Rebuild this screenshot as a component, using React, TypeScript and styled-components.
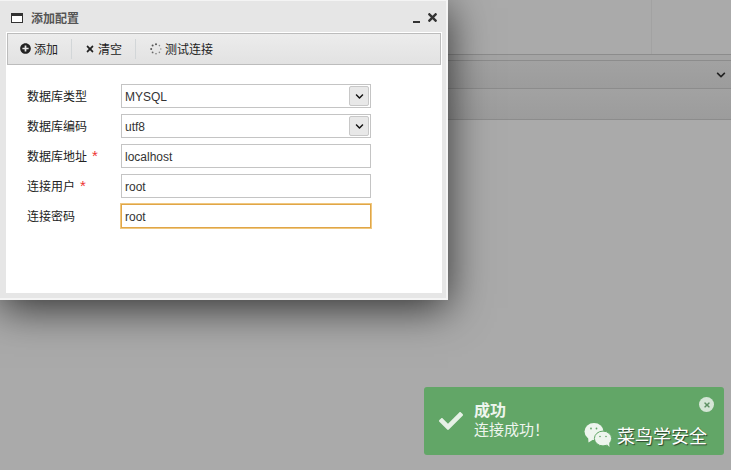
import styled, { createGlobalStyle } from "styled-components";
import { FaCheck, FaChevronDown, FaPlusCircle, FaTimes } from "react-icons/fa";

const GlobalStyle = createGlobalStyle`
  html, body {
    margin: 0;
    padding: 0;
    width: 731px;
    height: 470px;
    overflow: hidden;
    background: #aaaaaa;
  }
  * { box-sizing: border-box; }
`;

const fontStack = `"Liberation Sans", "Noto Sans CJK SC", sans-serif`;

const fields = [
  { label: "数据库类型", value: "MYSQL", select: true },
  { label: "数据库编码", value: "utf8", select: true },
  { label: "数据库地址", value: "localhost", required: true },
  { label: "连接用户", value: "root", required: true },
  { label: "连接密码", value: "root", focused: true }
];

const WindowIcon = () => (
  <svg width="12" height="12" viewBox="0 0 12 12">
    <rect x="0.5" y="1.5" width="11" height="9" fill="#fff" stroke="#333" />
    <rect x="0" y="1" width="12" height="3" fill="#333" />
  </svg>
);

const SpinnerIcon = () => (
  <SpinnerSvg width="12" height="12" viewBox="0 0 12 12" fill="#555">
    <circle cx="6" cy="1.2" r="1" />
    <circle cx="9.4" cy="2.6" r="0.8" fill="#888" />
    <circle cx="10.8" cy="6" r="0.8" fill="#999" />
    <circle cx="9.4" cy="9.4" r="0.8" fill="#888" />
    <circle cx="6" cy="10.8" r="0.8" fill="#777" />
    <circle cx="2.6" cy="9.4" r="0.9" fill="#666" />
    <circle cx="1.2" cy="6" r="1" />
    <circle cx="2.6" cy="2.6" r="1" />
  </SpinnerSvg>
);

const WechatIcon = () => (
  <svg width="28" height="26" viewBox="0 0 28 26" fill="#eef5ee">
    <ellipse cx="10" cy="9.5" rx="9.5" ry="8.4" />
    <path d="M4 14 L4.5 20.5 L10 17 Z" />
    <ellipse cx="19" cy="16.5" rx="8.6" ry="7.4" stroke="#62a667" strokeWidth="1" />
    <path d="M22.5 22 L25.5 25 L25 19 Z" />
    <circle cx="7" cy="6.5" r="0.9" fill="#62a667" />
    <circle cx="12.5" cy="6.5" r="0.9" fill="#62a667" />
    <circle cx="16" cy="14.5" r="0.8" fill="#62a667" />
    <circle cx="22" cy="14.5" r="0.8" fill="#62a667" />
  </svg>
);

const App = () => {
  return (
    <Page>
      <GlobalStyle />
      <TopBar>
        <TopCell />
        <TopCellSmall />
      </TopBar>
      <ThinRow />
      <SelectRow>
        <FaChevronDown size={10} color="#222" />
      </SelectRow>
      <PlainRow />

      <Modal>
        <TitleBar>
          <TitleLeft>
            <WindowIcon />
            <TitleText>添加配置</TitleText>
          </TitleLeft>
          <TitleTools>
            <MinusMark />
            <FaTimes size={13} color="#333" />
          </TitleTools>
        </TitleBar>
        <Body>
          <Toolbar>
            <ToolButton>
              <FaPlusCircle size={11} color="#222" />
              添加
            </ToolButton>
            <ToolDivider />
            <ToolButton>
              <FaTimes size={10} color="#222" />
              清空
            </ToolButton>
            <ToolDivider />
            <ToolButton>
              <SpinnerIcon />
              测试连接
            </ToolButton>
          </Toolbar>
          <Form>
            {fields.map((f) => (
              <Row key={f.label}>
                <Label>
                  {f.label}
                  {f.required ? <Star>*</Star> : null}
                </Label>
                <Input $focused={f.focused}>
                  {f.value}
                  {f.select ? (
                    <ArrowButton>
                      <FaChevronDown size={9} color="#111" />
                    </ArrowButton>
                  ) : null}
                </Input>
              </Row>
            ))}
          </Form>
        </Body>
      </Modal>

      <Toast>
        <FaCheck size={24} color="#e6f1e6" />
        <ToastText>
          <ToastTitle>成功</ToastTitle>
          <ToastMessage>{"连接成功\uFF01"}</ToastMessage>
        </ToastText>
        <ToastClose>
          <FaTimes size={8} color="#5d8f62" />
        </ToastClose>
        <Watermark>
          <WechatIcon />
          <WatermarkText>菜鸟学安全</WatermarkText>
        </Watermark>
      </Toast>
    </Page>
  );
};

export default App;

const Page = styled.div`
  position: relative;
  width: 731px;
  height: 470px;
  overflow: hidden;
  background: #aaaaaa;
  font-family: ${fontStack};
`;

const TopBar = styled.div`
  display: flex;
  height: 55px;
  border-bottom: 1px solid #8c8c8c;
`;

const TopCell = styled.div`
  width: 652px;
  border-right: 1px solid #a2a2a2;
`;

const TopCellSmall = styled.div`
  flex: 1;
`;

const ThinRow = styled.div`
  height: 6px;
  background: #a4a4a4;
  border-bottom: 1px solid #8c8c8c;
`;

const SelectRow = styled.div`
  display: flex;
  align-items: center;
  justify-content: flex-end;
  height: 28px;
  padding-right: 5px;
  background: linear-gradient(#a2a2a2, #9c9c9c);
  border-bottom: 1px solid #8c8c8c;
`;

const PlainRow = styled.div`
  height: 31px;
  background: linear-gradient(#a2a2a2, #9c9c9c);
  border-bottom: 1px solid #8c8c8c;
`;

const Modal = styled.div`
  position: absolute;
  left: 0;
  top: 0;
  width: 448px;
  height: 300px;
  display: flex;
  flex-direction: column;
  padding: 0 4px 5px 6px;
  background: #e6e6e6;
  border-top: 1px solid #f4f4f4;
  border-right: 2px solid #f4f4f4;
  border-bottom: 2px solid #f4f4f4;
  box-shadow: 0 8px 40px rgba(0, 0, 0, 0.72);
`;

const TitleBar = styled.div`
  display: flex;
  align-items: center;
  justify-content: space-between;
  flex-shrink: 0;
  height: 31px;
  padding: 2px 3px 0 5px;
`;

const TitleLeft = styled.div`
  display: flex;
  align-items: center;
  gap: 8px;
`;

const TitleText = styled.span`
  font-size: 12px;
  font-weight: 700;
  color: #555;
`;

const TitleTools = styled.div`
  display: flex;
  align-items: center;
  gap: 6px;
`;

const MinusMark = styled.span`
  width: 7px;
  height: 2px;
  margin-top: 8px;
  background: #333;
`;

const Body = styled.div`
  flex: 1;
  padding-top: 1px;
  background: #ffffff;
`;

const Toolbar = styled.div`
  display: flex;
  align-items: center;
  height: 32px;
  margin: 0 1px;
  padding: 0 0 1px 12px;
  background: linear-gradient(#ececec, #e2e2e2);
  border: 1px solid #bcbcbc;
`;

const ToolButton = styled.div`
  display: flex;
  align-items: center;
  gap: 3px;
  font-size: 12px;
  color: #222;
`;

const SpinnerSvg = styled.svg`
  margin-left: 1px;
`;

const ToolDivider = styled.span`
  width: 1px;
  height: 20px;
  margin: 0 13px;
  background: #d2d6d8;
`;

const Form = styled.div`
  display: flex;
  flex-direction: column;
  gap: 6px;
  padding: 19px 0 0 21px;
`;

const Row = styled.div`
  display: flex;
  align-items: center;
  height: 24px;
`;

const Label = styled.div`
  width: 94px;
  padding-top: 2px;
  font-size: 12px;
  line-height: 18px;
  color: #222;
`;

const Star = styled.span`
  margin-left: 5px;
  font-size: 15px;
  line-height: 0;
  color: #e33;
`;

const Input = styled.div<{ $focused?: boolean }>`
  position: relative;
  display: flex;
  align-items: center;
  width: 250px;
  height: 24px;
  padding: 1px 0 0 3px;
  font-size: 12px;
  color: #333;
  background: #fff;
  border: 1px solid ${({ $focused }) => ($focused ? "#e0a648" : "#c4c4c4")};
  box-shadow: ${({ $focused }) => ($focused ? "0 0 0 1px #f0c880" : "none")};
`;

const ArrowButton = styled.span`
  position: absolute;
  right: 1px;
  top: 1px;
  display: flex;
  align-items: center;
  justify-content: center;
  width: 20px;
  height: 20px;
  background: #e8e8e8;
  border: 1px solid #c8c8c8;
  border-radius: 2px;
`;

const Toast = styled.div`
  position: absolute;
  left: 424px;
  top: 387px;
  width: 300px;
  height: 68px;
  display: flex;
  align-items: center;
  gap: 11px;
  padding-left: 15px;
  background: #62a667;
  border-radius: 3px;
`;

const ToastText = styled.div`
  display: flex;
  flex-direction: column;
  color: #eef5ee;
`;

const ToastTitle = styled.span`
  font-size: 16px;
  line-height: 18px;
  font-weight: 700;
`;

const ToastMessage = styled.span`
  font-size: 15px;
  line-height: 20px;
`;

const ToastClose = styled.span`
  position: absolute;
  right: 10px;
  top: 10px;
  display: flex;
  align-items: center;
  justify-content: center;
  width: 15px;
  height: 15px;
  border-radius: 50%;
  background: #d5e6d6;
`;

const Watermark = styled.div`
  position: absolute;
  left: 160px;
  top: 35px;
  display: flex;
  align-items: center;
  gap: 5px;
`;

const WatermarkText = styled.span`
  font-size: 18px;
  color: #fff;
  text-shadow: 1px 1px 1px rgba(0, 0, 0, 0.6);
`;
